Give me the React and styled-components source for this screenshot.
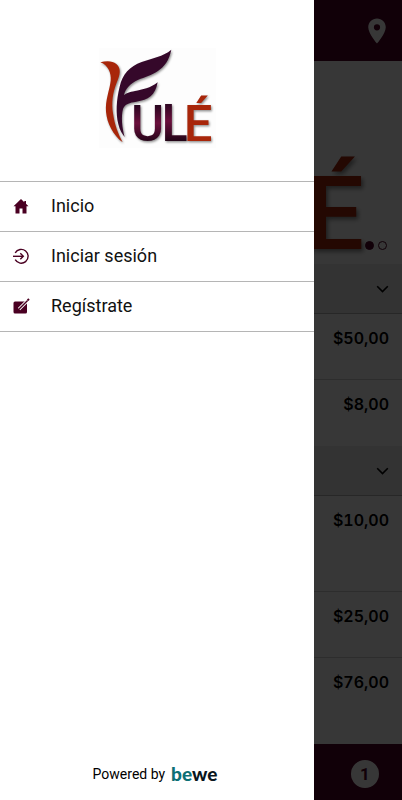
import styled, { createGlobalStyle } from 'styled-components'

const GlobalStyle = createGlobalStyle`
  * {
    box-sizing: border-box;
  }

  body {
    margin: 0;
    background: #fff;
    color: #000;
    font-family: Roboto, 'Liberation Sans', sans-serif;
  }
`

const Page = styled.div`
  display: flex;
  flex-direction: column;
  min-height: 100vh;
`

const TopBar = styled.header`
  display: flex;
  align-items: center;
  justify-content: flex-end;
  height: 61px;
  padding-right: 10px;
  background: #4f0025;
`

const IconButton = styled.button`
  display: flex;
  padding: 0;
  border: 0;
  background: none;
  color: #fff;
`

const Banner = styled.section`
  position: relative;
  display: flex;
  justify-content: flex-end;
  height: 203px;
  padding-right: 30px;
`

const Dots = styled.div`
  position: absolute;
  right: 15px;
  bottom: 14px;
  display: flex;
  gap: 4px;
`

const Dot = styled.button`
  width: 9px;
  height: 9px;
  padding: 0;
  border: 1px solid #4f0025;
  border-radius: 50%;
  background: ${({ $active }) => ($active ? '#4f0025' : 'transparent')};
`

const Services = styled.main`
  flex: 1;
`

const CategoryButton = styled.button`
  display: flex;
  align-items: center;
  justify-content: flex-end;
  width: 100%;
  height: 50px;
  padding: 0 13px;
  border: 0;
  border-bottom: 1px solid #b4b4b4;
  background: #ececec;
  color: #000;
`

const ServiceList = styled.ul`
  margin: 0;
  padding: 0;
  list-style: none;
`

const ServiceRow = styled.li`
  display: flex;
  justify-content: flex-end;
  min-height: ${({ $tall }) => ($tall ? '96px' : '66px')};
  padding: 15px 13px;
  border-bottom: 1px solid #d0d0d0;

  &:last-child {
    border-bottom: 0;
  }
`

const Price = styled.span`
  font-family: Inter, 'Liberation Sans', sans-serif;
  font-size: 16px;
  font-weight: 600;
  font-variant-numeric: tabular-nums;
  line-height: 18px;
`

const BottomBar = styled.footer`
  display: flex;
  align-items: center;
  justify-content: flex-end;
  height: 56px;
  padding-right: 23px;
  background: #4f0025;
`

const Counter = styled.span`
  display: flex;
  align-items: center;
  justify-content: center;
  width: 28px;
  height: 28px;
  margin-top: 4px;
  border-radius: 50%;
  background: #fff;
  color: #4f0025;
  font-size: 17px;
  font-weight: 700;
`

const Overlay = styled.div`
  position: fixed;
  inset: 0;
  background: rgba(0, 0, 0, 0.785);
`

const Drawer = styled.aside`
  display: flex;
  flex-direction: column;
  width: calc(100% - 88px);
  height: 100%;
  background: #fff;
`

const DrawerHeader = styled.div`
  display: flex;
  justify-content: center;
  height: 181px;
  padding-top: 48px;
`

const Menu = styled.nav`
  flex: 1;
  border-top: 1px solid #b5b5b5;
`

const MenuLink = styled.a`
  display: flex;
  align-items: center;
  gap: 21px;
  height: 50px;
  padding: 0 12px 2px;
  border-bottom: 1px solid #b5b5b5;
  color: #111;
  font-size: 18px;
  text-decoration: none;

  svg {
    color: #4a0022;
  }
`

const Powered = styled.p`
  display: flex;
  align-items: center;
  justify-content: center;
  gap: 6px;
  height: 20px;
  margin: 0 0 16px;
  padding-right: 4px;
  font-size: 14px;
`

const Brand = styled.span`
  color: #0a1620;
  font-family: Lato, sans-serif;
  font-size: 19px;
  font-weight: 900;
  line-height: 20px;
`

const BrandAccent = styled.span`
  color: #0d7076;
`

const LogoSvg = styled.svg`
  flex: none;
  width: ${({ $large }) => ($large ? '238px' : '117px')};
  height: ${({ $large }) => ($large ? '203px' : '100px')};
  background: ${({ $large }) => ($large ? 'none' : '#fdfdfd')};

  g {
    filter: drop-shadow(3px 4px 3px rgba(0, 0, 0, 0.45));
  }
`

const LogoLetter = styled.text`
  font-family: ${({ $narrow }) => ($narrow ? 'Lato' : 'Roboto')}, sans-serif;
  font-size: 152px;
  font-weight: ${({ $narrow }) => ($narrow ? 700 : 500)};
`

function Logo({ id, large }) {
  return (
    <LogoSvg $large={large} viewBox="30 24 351 300" role="img" aria-label="Fulé">
      <defs>
        <linearGradient id={id} x1="0" y1="0" x2="0" y2="1">
          <stop offset="0.2" stopColor="#2a0620" />
          <stop offset="0.5" stopColor="#6a0f3c" />
          <stop offset="0.85" stopColor="#1c0414" />
        </linearGradient>
      </defs>
      <g>
        <path
          fill="#a8260a"
          d="M34 67C50 62 70 61 82 72C98 86 93 106 83 128C71 158 67 188 72 220C77 256 88 282 101 307C72 284 54 250 51 215C48 180 62 150 65 122C67 100 58 76 34 67Z"
        />
        <path
          fill="#35082a"
          d="M247 29C222 50 190 54 158 66C122 79 100 103 92 140C82 180 80 220 88 252C92 270 100 282 107 291C99 262 96 230 102 207C107 192 122 188 142 185C178 180 199 166 206 127C185 144 160 149 138 153C121 156 112 159 105 166C109 147 122 131 148 119C186 104 234 94 247 29Z"
        />
        <LogoLetter x="126" y="302" fill={`url(#${id})`}>U</LogoLetter>
        <LogoLetter $narrow x="216" y="302" fill={`url(#${id})`}>L</LogoLetter>
        <LogoLetter x="284" y="302" fill="#a8260a">É</LogoLetter>
      </g>
    </LogoSvg>
  )
}

function PinIcon() {
  return (
    <svg width="30" height="30" viewBox="0 0 24 24" fill="currentColor" aria-hidden="true">
      <path d="M12 2C8.13 2 5 5.13 5 9c0 5.25 7 13 7 13s7-7.75 7-13c0-3.87-3.13-7-7-7zm0 9.5a2.5 2.5 0 1 1 0-5 2.5 2.5 0 0 1 0 5z" />
    </svg>
  )
}

function ChevronIcon() {
  return (
    <svg width="13" height="8" viewBox="0 0 13 8" fill="none" stroke="currentColor" strokeWidth="1.6" aria-hidden="true">
      <path d="M1.2 1.2L6.5 6.5L11.8 1.2" />
    </svg>
  )
}

function HomeIcon() {
  return (
    <svg width="18" height="18" viewBox="0 0 18 18" fill="currentColor" aria-hidden="true">
      <path d="M9 2L1.5 9.3H3.5V16.5H7.5V11.5H10.5V16.5H14.5V9.3H16.5L14 6.8V4H12.3V5.2Z" />
    </svg>
  )
}

function LoginIcon() {
  return (
    <svg width="18" height="18" viewBox="0 0 18 18" fill="none" stroke="currentColor" strokeWidth="1.4" aria-hidden="true">
      <path d="M3.2 5.9A6.9 6.9 0 1 1 3.2 12.7" />
      <path d="M1 9.3H11" />
      <path d="M8.3 6.3L11.3 9.3L8.3 12.3" />
    </svg>
  )
}

function RegisterIcon() {
  return (
    <svg width="18" height="18" viewBox="0 0 18 18" aria-hidden="true">
      <rect x="1.5" y="4.5" width="13.5" height="12" rx="1.5" fill="currentColor" />
      <path d="M7 12.2L16 3.2" stroke="#fff" strokeWidth="3.2" />
      <path d="M6.4 12.8L15.6 3.6" stroke="currentColor" strokeWidth="1.4" />
      <path d="M15.6 3.4L17 2" stroke="currentColor" strokeWidth="2" />
    </svg>
  )
}

const menuItems = [
  { label: 'Inicio', Icon: HomeIcon },
  { label: 'Iniciar sesión', Icon: LoginIcon },
  { label: 'Regístrate', Icon: RegisterIcon },
]

const categories = [
  { id: 1, services: [{ price: 50 }, { price: 8 }] },
  { id: 2, services: [{ price: 10, tall: true }, { price: 25 }, { price: 76 }] },
]

const formatPrice = (price) => `$${price.toFixed(2).replace('.', ',')}`

export default function App() {
  return (
    <>
      <GlobalStyle />
      <Page>
        <TopBar>
          <IconButton aria-label="Ubicación">
            <PinIcon />
          </IconButton>
        </TopBar>
        <Banner>
          <Logo id="banner-logo" large />
          <Dots>
            <Dot $active aria-label="Imagen 1" />
            <Dot aria-label="Imagen 2" />
          </Dots>
        </Banner>
        <Services>
          {categories.map(({ id, services }) => (
            <section key={id}>
              <CategoryButton aria-label={`Categoría ${id}`}>
                <ChevronIcon />
              </CategoryButton>
              <ServiceList>
                {services.map(({ price, tall }) => (
                  <ServiceRow key={price} $tall={tall}>
                    <Price>{formatPrice(price)}</Price>
                  </ServiceRow>
                ))}
              </ServiceList>
            </section>
          ))}
        </Services>
        <BottomBar>
          <Counter>1</Counter>
        </BottomBar>
      </Page>
      <Overlay>
        <Drawer>
          <DrawerHeader>
            <Logo id="drawer-logo" />
          </DrawerHeader>
          <Menu>
            {menuItems.map(({ label, Icon }) => (
              <MenuLink key={label} href="#">
                <Icon />
                {label}
              </MenuLink>
            ))}
          </Menu>
          <Powered>
            Powered by
            <Brand>
              <BrandAccent>be</BrandAccent>we
            </Brand>
          </Powered>
        </Drawer>
      </Overlay>
    </>
  )
}
